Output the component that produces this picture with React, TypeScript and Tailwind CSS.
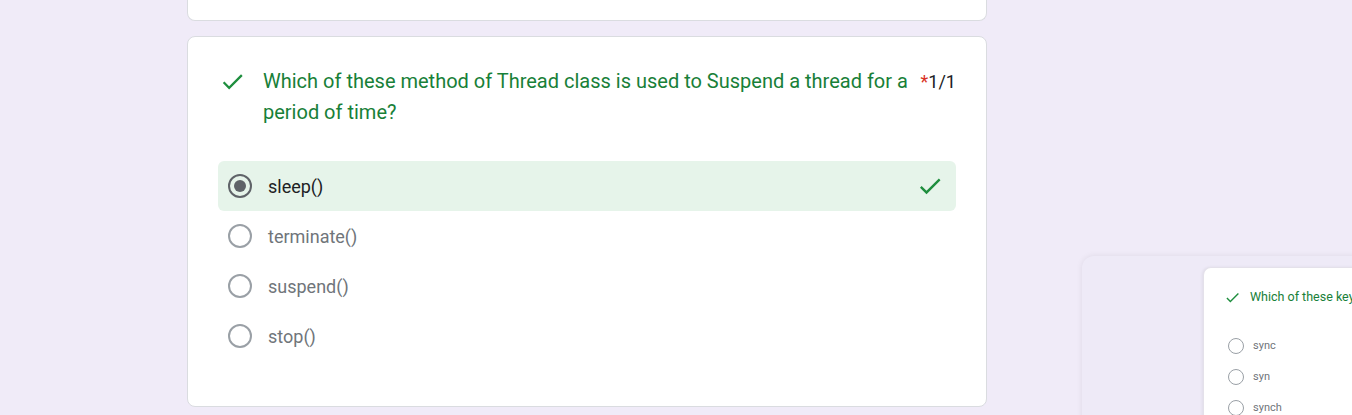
import React from 'react';

const CheckIcon = ({ className }: { className?: string }) => (
  <svg viewBox="0 0 24 24" className={className} fill="currentColor">
    <path d="M9 16.17L4.83 12l-1.42 1.41L9 19 21 7l-1.41-1.41z" />
  </svg>
);

const options = [
  { label: 'sleep()', selected: true },
  { label: 'terminate()', selected: false },
  { label: 'suspend()', selected: false },
  { label: 'stop()', selected: false },
];

function Radio({ selected }: { selected: boolean }) {
  return (
    <div
      className={`flex h-6 w-6 shrink-0 items-center justify-center rounded-full border-2 ${
        selected ? 'border-[#5f6368]' : 'border-[#9aa0a6]'
      }`}
    >
      {selected && <div className="h-3 w-3 rounded-full bg-[#5f6368]" />}
    </div>
  );
}

export default function App() {
  return (
    <div
      className="relative h-[415px] w-full overflow-hidden bg-[#f0ebf8]"
      style={{ fontFamily: 'Roboto, "Noto Sans", Arial, sans-serif' }}
    >
      <div className="ml-[187px] flex w-[800px] flex-col gap-[15px]">
        {/* previous card, only its bottom edge shows */}
        <div className="h-[21px] rounded-b-lg border border-t-0 border-[#dadce0] bg-white" />

        {/* question card */}
        <div className="rounded-lg border border-[#dadce0] bg-white px-[30px] pb-[45px] pt-[29px]">
          <div className="flex items-start">
            <CheckIcon className="ml-[1px] mt-[2px] h-[27px] w-[27px] shrink-0 text-[#1e8e3e]" />
            <div className="ml-[17px] min-w-0 flex-1 whitespace-nowrap text-[20px] leading-[31px] text-[#188038]">
              Which of these method of Thread class is used to Suspend a thread for a
              <br />
              period of time?
            </div>
            <div className="ml-[6px] shrink-0 text-[18px] leading-[31px] text-[#202124]">
              <span className="text-[#d93025]">*</span>1/1
            </div>
          </div>

          <div className="mt-[33px] flex flex-col">
            {options.map((o) => (
              <div
                key={o.label}
                className={`flex h-[50px] items-center rounded-md pl-[10px] pr-[12px] ${
                  o.selected ? 'bg-[#e6f4ea]' : ''
                }`}
              >
                <Radio selected={o.selected} />
                <span
                  className={`ml-4 flex-1 text-[18px] ${
                    o.selected ? 'text-[#202124]' : 'text-[#70757a]'
                  }`}
                >
                  {o.label}
                </span>
                {o.selected && <CheckIcon className="h-[28px] w-[28px] text-[#1e8e3e]" />}
              </div>
            ))}
          </div>
        </div>
      </div>

      {/* floating preview panel */}
      <div className="absolute left-[1082px] top-[256px] h-[200px] w-[400px] rounded-tl-xl bg-[#eeeaf7] shadow-[0_0_6px_rgba(0,0,0,0.08)]">
        <div className="ml-[121px] mt-[11px] h-[200px] rounded-tl-lg border-l border-t border-[#e4e1ea] bg-white pl-[20px] pt-[20px] shadow-[-1px_0_3px_rgba(0,0,0,0.06)]">
          <div className="flex items-center">
            <CheckIcon className="h-[17px] w-[17px] text-[#1e8e3e]" />
            <span className="ml-[9px] whitespace-nowrap text-[12.5px] text-[#188038]">
              Which of these keywords
            </span>
          </div>
          <div className="mt-[31px] flex flex-col gap-[15px] pl-[4px]">
            {['sync', 'syn', 'synch'].map((s) => (
              <div key={s} className="flex h-[16px] items-center">
                <div className="h-4 w-4 rounded-full border-[1.5px] border-[#9aa0a6]" />
                <span className="ml-[9px] text-[11px] text-[#70757a]">{s}</span>
              </div>
            ))}
          </div>
        </div>
      </div>
    </div>
  );
}
